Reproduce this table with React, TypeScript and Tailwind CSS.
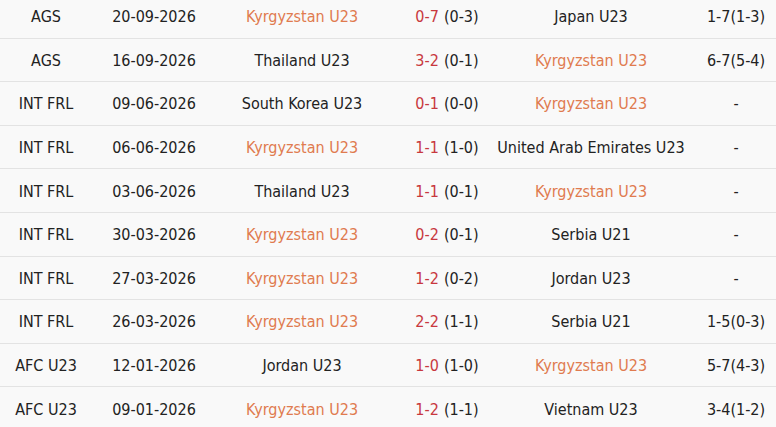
import React from 'react';

type Match = {
  league: string;
  date: string;
  home: string;
  score: string;
  half: string;
  away: string;
  extra: string;
};

const TEAM = 'Kyrgyzstan U23';

const matches: Match[] = [
  { league: 'AGS', date: '20-09-2026', home: TEAM, score: '0-7', half: '(0-3)', away: 'Japan U23', extra: '1-7(1-3)' },
  { league: 'AGS', date: '16-09-2026', home: 'Thailand U23', score: '3-2', half: '(0-1)', away: TEAM, extra: '6-7(5-4)' },
  { league: 'INT FRL', date: '09-06-2026', home: 'South Korea U23', score: '0-1', half: '(0-0)', away: TEAM, extra: '-' },
  { league: 'INT FRL', date: '06-06-2026', home: TEAM, score: '1-1', half: '(1-0)', away: 'United Arab Emirates U23', extra: '-' },
  { league: 'INT FRL', date: '03-06-2026', home: 'Thailand U23', score: '1-1', half: '(0-1)', away: TEAM, extra: '-' },
  { league: 'INT FRL', date: '30-03-2026', home: TEAM, score: '0-2', half: '(0-1)', away: 'Serbia U21', extra: '-' },
  { league: 'INT FRL', date: '27-03-2026', home: TEAM, score: '1-2', half: '(0-2)', away: 'Jordan U23', extra: '-' },
  { league: 'INT FRL', date: '26-03-2026', home: TEAM, score: '2-2', half: '(1-1)', away: 'Serbia U21', extra: '1-5(0-3)' },
  { league: 'AFC U23', date: '12-01-2026', home: 'Jordan U23', score: '1-0', half: '(1-0)', away: TEAM, extra: '5-7(4-3)' },
  { league: 'AFC U23', date: '09-01-2026', home: TEAM, score: '1-2', half: '(1-1)', away: 'Vietnam U23', extra: '3-4(1-2)' },
];

const teamClass = (name: string) => (name === TEAM ? 'text-[#e07b4f]' : 'text-[#222]');

export default function App() {
  return (
    <div className="w-[776px] h-[427px] overflow-hidden bg-[#f9f9f9] text-[#222] text-[16px] font-['DejaVu_Sans_Condensed','DejaVu_Sans',sans-serif] [font-stretch:condensed]">
      <div className="-mt-[5px]">
        {matches.map((m, i) => (
          <div
            key={i}
            className="grid grid-cols-[92px_124px_172px_118px_170px_120px] h-[43.6px] pt-[2px] items-center border-b border-[#e3e3e3] whitespace-nowrap"
          >
            <div className="text-center">{m.league}</div>
            <div className="text-center">{m.date}</div>
            <div className={`text-center ${teamClass(m.home)}`}>{m.home}</div>
            <div className="flex justify-center">
              <span className="text-[#c8383e]">{m.score}</span>
              <span className="ml-[5px]">{m.half}</span>
            </div>
            <div className={`flex justify-center ${teamClass(m.away)}`}>{m.away}</div>
            <div className="text-center">{m.extra}</div>
          </div>
        ))}
      </div>
    </div>
  );
}
